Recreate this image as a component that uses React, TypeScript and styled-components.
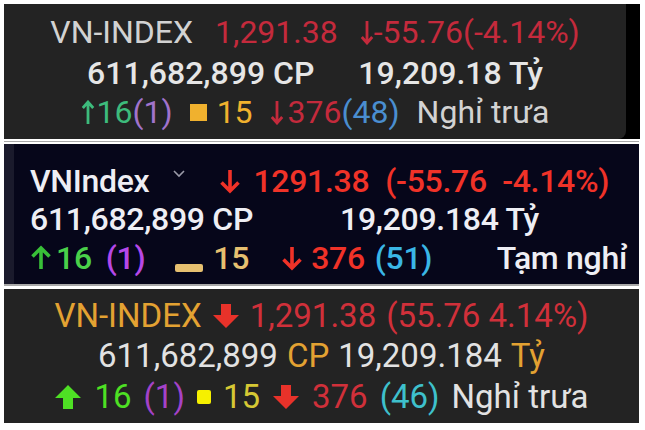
import React from "react";
import styled, { createGlobalStyle } from "styled-components";

const GlobalStyle = createGlobalStyle`
  html, body { margin: 0; padding: 0; background: #fff; }
  body { font-family: Roboto, "Noto Sans", "DejaVu Sans", sans-serif; }
`;

const Page = styled.div`
  width: 645px;
  height: 430px;
  padding: 4px 0 0 4px;
  box-sizing: border-box;
  display: flex;
  flex-direction: column;
  overflow: hidden;
`;

/* ---------- shared ---------- */
const T = styled.span<{ $c: string; $ml?: number }>`
  color: ${(p) => p.$c};
  margin-left: ${(p) => p.$ml ?? 0}px;
`;

const Group = styled.span<{ $ml?: number }>`
  display: inline-flex;
  align-items: center;
  margin-left: ${(p) => p.$ml ?? 0}px;
`;

type Dir = "up" | "down";
type Kind = "thin" | "bold" | "block";

const ArrowSvg = styled.svg<{ $ml?: number; $mr?: number }>`
  flex: none;
  display: block;
  margin-left: ${(p) => p.$ml ?? 0}px;
  margin-right: ${(p) => p.$mr ?? 0}px;
`;

function Arrow({ dir, kind, color, ml, mr }: { dir: Dir; kind: Kind; color: string; ml?: number; mr?: number }) {
  const dims = kind === "thin" ? [14, 25] : kind === "bold" ? [22, 26] : [28, 26];
  const [w, h] = dims;
  const rot = dir === "up" ? `rotate(180 ${w / 2} ${h / 2})` : undefined;
  return (
    <ArrowSvg width={w} height={h} viewBox={`0 0 ${w} ${h}`} $ml={ml} $mr={mr}>
      <g transform={rot}>
        {kind === "thin" && (
          <path d="M7 1 V23 M1.8 17 L7 23 L12.2 17" stroke={color} strokeWidth={2.8} fill="none" />
        )}
        {kind === "bold" && (
          <path d="M11 2 V23 M2.5 14.5 L11 23 L19.5 14.5" stroke={color} strokeWidth={3.6} fill="none" />
        )}
        {kind === "block" && <path d="M9 1 H19 V12 H27 L14 25 L1 12 H9 Z" fill={color} />}
      </g>
    </ArrowSvg>
  );
}

const Square = styled.span<{ $c: string; $s: number; $r?: number; $mr?: number }>`
  display: inline-block;
  width: ${(p) => p.$s}px;
  height: ${(p) => p.$s}px;
  background: ${(p) => p.$c};
  border-radius: ${(p) => p.$r ?? 0}px;
  margin-right: ${(p) => p.$mr ?? 0}px;
`;

const Bar = styled.span<{ $ml?: number }>`
  display: inline-block;
  width: 28px;
  height: 8px;
  background: #e6c070;
  border-radius: 2px;
  align-self: flex-end;
  margin-bottom: 6px;
  margin-left: ${(p) => p.$ml ?? 0}px;
  margin-right: 10px;
`;

/* ---------- panel 1 ---------- */
const Panel1 = styled.div`
  width: 636px;
  height: 135px;
  flex: none;
  display: flex;
  background: #000;
`;

const Screen1 = styled.div`
  flex: 1;
  margin-right: 14px;
  background: #232323;
  border-bottom-right-radius: 8px;
  display: flex;
  flex-direction: column;
  align-items: center;
  padding: 8px 0 0 0;
  box-sizing: border-box;
  font-size: 32px;
  color: #cfcfcf;
`;

const Row = styled.div<{ $h: number; $gap?: number; $w?: number }>`
  display: flex;
  align-items: center;
  height: ${(p) => p.$h}px;
  line-height: ${(p) => p.$h}px;
  gap: ${(p) => p.$gap ?? 0}px;
  font-weight: ${(p) => p.$w ?? 400};
  white-space: nowrap;
`;

/* ---------- panel 2 ---------- */
const Panel2 = styled.div`
  width: 635px;
  height: 140px;
  flex: none;
  margin-top: 5px;
  display: flex;
  background: #06061a;
  box-shadow: 0 -2px 0 0 #fff, 0 -3px 0 0 #a8a8a8, 0 2px 0 0 #a8a8a8;
  font-size: 32px;
  font-weight: 500;
  letter-spacing: -0.3px;
  color: #ececf2;
`;

const Strip = styled.div`
  width: 10px;
  background: #1a1a2c;
`;

const Body2 = styled.div`
  flex: 1;
  display: flex;
  flex-direction: column;
  padding: 18px 12px 0 16px;
`;

const Cols = styled.div`
  display: grid;
  grid-template-columns: 310px auto;
  height: 38px;
  line-height: 38px;
  white-space: nowrap;
`;

const Chevron = styled.svg`
  display: block;
  margin: -14px 0 0 24px;
`;

const Push = styled.span`
  margin-left: auto;
`;

/* ---------- panel 3 ---------- */
const Panel3 = styled.div`
  width: 635px;
  height: 134px;
  flex: none;
  margin-top: 5px;
  background: #232323;
  display: flex;
  flex-direction: column;
  align-items: center;
  padding-top: 7px;
  box-sizing: border-box;
  font-size: 33px;
  color: #dedede;
`;

export default function App() {
  return (
    <>
      <GlobalStyle />
      <Page>
        <Panel1>
          <Screen1>
            <Row $h={40} $gap={22}>
              <T $c="#d2d2d2">VN-INDEX</T>
              <T $c="#c42a3c">1,291.38</T>
              <Group>
                <Arrow dir="down" kind="thin" color="#c42a3c" />
                <T $c="#c42a3c">-55.76(-4.14%)</T>
              </Group>
            </Row>
            <Row $h={42} $gap={44} $w={500}>
              <T $c="#e6e6e6">611,682,899 CP</T>
              <T $c="#e6e6e6">19,209.18 Tỷ</T>
            </Row>
            <Row $h={36} $gap={17}>
              <Group>
                <Arrow dir="up" kind="thin" color="#3dbb7c" mr={2} />
                <T $c="#3dbb7c">16</T>
                <T $c="#a173cc">(1)</T>
              </Group>
              <Group>
                <Square $c="#f0b12e" $s={17} $mr={10} />
                <T $c="#f0b12e">15</T>
              </Group>
              <Group>
                <Arrow dir="down" kind="thin" color="#c42a3c" mr={4} />
                <T $c="#c42a3c">376</T>
                <T $c="#4a8ed0">(48)</T>
              </Group>
              <T $c="#d2d2d2">Nghỉ trưa</T>
            </Row>
          </Screen1>
        </Panel1>

        <Panel2>
          <Strip />
          <Body2>
            <Row $h={38} $w={500}>
              <T $c="#eeeef4">VNIndex</T>
              <Chevron width="12" height="8" viewBox="0 0 12 8">
                <path d="M1 1 L6 6 L11 1" stroke="#9a9aa8" strokeWidth="1.6" fill="none" />
              </Chevron>
              <Arrow dir="down" kind="bold" color="#f03228" ml={34} mr={12} />
              <T $c="#f03228">1291.38</T>
              <T $c="#f03228" $ml={16}>(-55.76&nbsp;&nbsp;-4.14%)</T>
            </Row>
            <Cols>
              <T $c="#eeeef4">611,682,899 CP</T>
              <T $c="#eeeef4">19,209.184 Tỷ</T>
            </Cols>
            <Row $h={40} $w={500}>
              <Arrow dir="up" kind="bold" color="#38c038" mr={4} />
              <T $c="#4ad04a">16</T>
              <T $c="#b548e8" $ml={14}>(1)</T>
              <Bar $ml={30} />
              <T $c="#e6c070">15</T>
              <Arrow dir="down" kind="bold" color="#f03228" ml={32} mr={8} />
              <T $c="#f03228">376</T>
              <T $c="#3ab6e6" $ml={10}>(51)</T>
              <Push>
                <T $c="#eeeef4">Tạm nghỉ</T>
              </Push>
            </Row>
          </Body2>
        </Panel2>

        <Panel3>
          <Row $h={40} $gap={10}>
            <T $c="#e3a232">VN-INDEX</T>
            <Arrow dir="down" kind="block" color="#e8322a" />
            <T $c="#d0303a">1,291.38</T>
            <T $c="#d0303a">(55.76 4.14%)</T>
          </Row>
          <Row $h={40} $gap={9}>
            <T $c="#e2e2e2">611,682,899</T>
            <T $c="#e3a232">CP</T>
            <T $c="#e2e2e2">19,209.184</T>
            <T $c="#e3a232">Tỷ</T>
          </Row>
          <Row $h={42} $gap={12}>
            <Arrow dir="up" kind="block" color="#4ee024" />
            <T $c="#4ee024">16</T>
            <T $c="#a442c8">(1)</T>
            <Square $c="#f6f000" $s={14} $r={2} />
            <T $c="#d6c834">15</T>
            <Arrow dir="down" kind="block" color="#e8322a" />
            <T $c="#d0303a">376</T>
            <T $c="#3ec0cc">(46)</T>
            <T $c="#e2e2e2">Nghỉ trưa</T>
          </Row>
        </Panel3>
      </Page>
    </>
  );
}
